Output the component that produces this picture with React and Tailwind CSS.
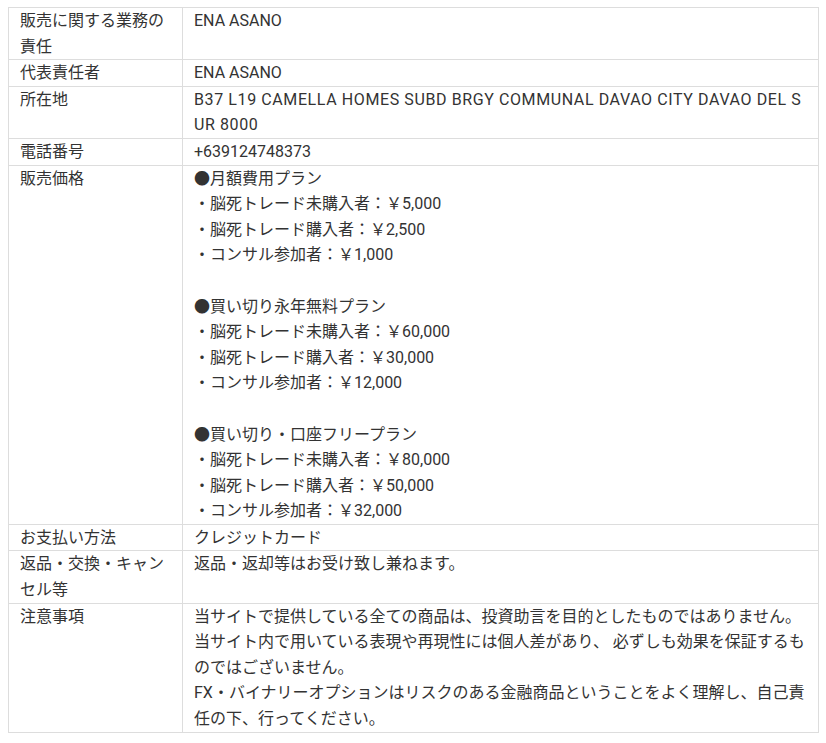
import React from "react";

const rows = [
  { h: ["販売に関する業務の責任"], d: ["ENA ASANO"] },
  { h: ["代表責任者"], d: ["ENA ASANO"] },
  { h: ["所在地"], d: ["B37 L19 CAMELLA HOMES SUBD BRGY COMMUNAL DAVAO CITY DAVAO DEL SUR 8000"], wide: true },
  { h: ["電話番号"], d: ["+639124748373"] },
  {
    h: ["販売価格"],
    d: [
      "●月額費用プラン",
      "・脳死トレード未購入者：￥5,000",
      "・脳死トレード購入者：￥2,500",
      "・コンサル参加者：￥1,000",
      "",
      "●買い切り永年無料プラン",
      "・脳死トレード未購入者：￥60,000",
      "・脳死トレード購入者：￥30,000",
      "・コンサル参加者：￥12,000",
      "",
      "●買い切り・口座フリープラン",
      "・脳死トレード未購入者：￥80,000",
      "・脳死トレード購入者：￥50,000",
      "・コンサル参加者：￥32,000",
    ],
  },
  { h: ["お支払い方法"], d: ["クレジットカード"] },
  { h: ["返品・交換・キャンセル等"], d: ["返品・返却等はお受け致し兼ねます。"] },
  {
    h: ["注意事項"],
    d: [
      "当サイトで提供している全ての商品は、投資助言を目的としたものではありません。",
      "当サイト内で用いている表現や再現性には個人差があり、 必ずしも効果を保証するものではございません。",
      "FX・バイナリーオプションはリスクのある金融商品ということをよく理解し、自己責任の下、行ってください。",
    ],
  },
];

export default function App() {
  return (
    <div
      className="bg-white min-h-[743px] pl-[8px] pt-[7px] text-[#333] text-[16px] leading-[25.6px]"
      style={{ fontFamily: '"Roboto", "Noto Sans CJK JP", sans-serif' }}
    >
      <table className="w-[811px] table-fixed border-collapse border border-[#ddd]">
        <colgroup>
          <col className="w-[174px]" />
          <col />
        </colgroup>
        <tbody>
          {rows.map((r, i) => (
            <tr key={i}>
              <td className="border border-[#ddd] px-[11px] py-0 align-top break-all">
                {r.h.map((t, j) => (
                  <div key={j}>{t}</div>
                ))}
              </td>
              <td
                className={
                  r.wide
                    ? "border border-[#ddd] px-[11px] py-0 align-top break-all tracking-[0.6px]"
                    : "border border-[#ddd] px-[11px] py-0 align-top break-all"
                }
              >
                {r.d.map((t, j) => (
                  <div key={j} className="min-h-[25.6px]">
                    {t}
                  </div>
                ))}
              </td>
            </tr>
          ))}
        </tbody>
      </table>
    </div>
  );
}
